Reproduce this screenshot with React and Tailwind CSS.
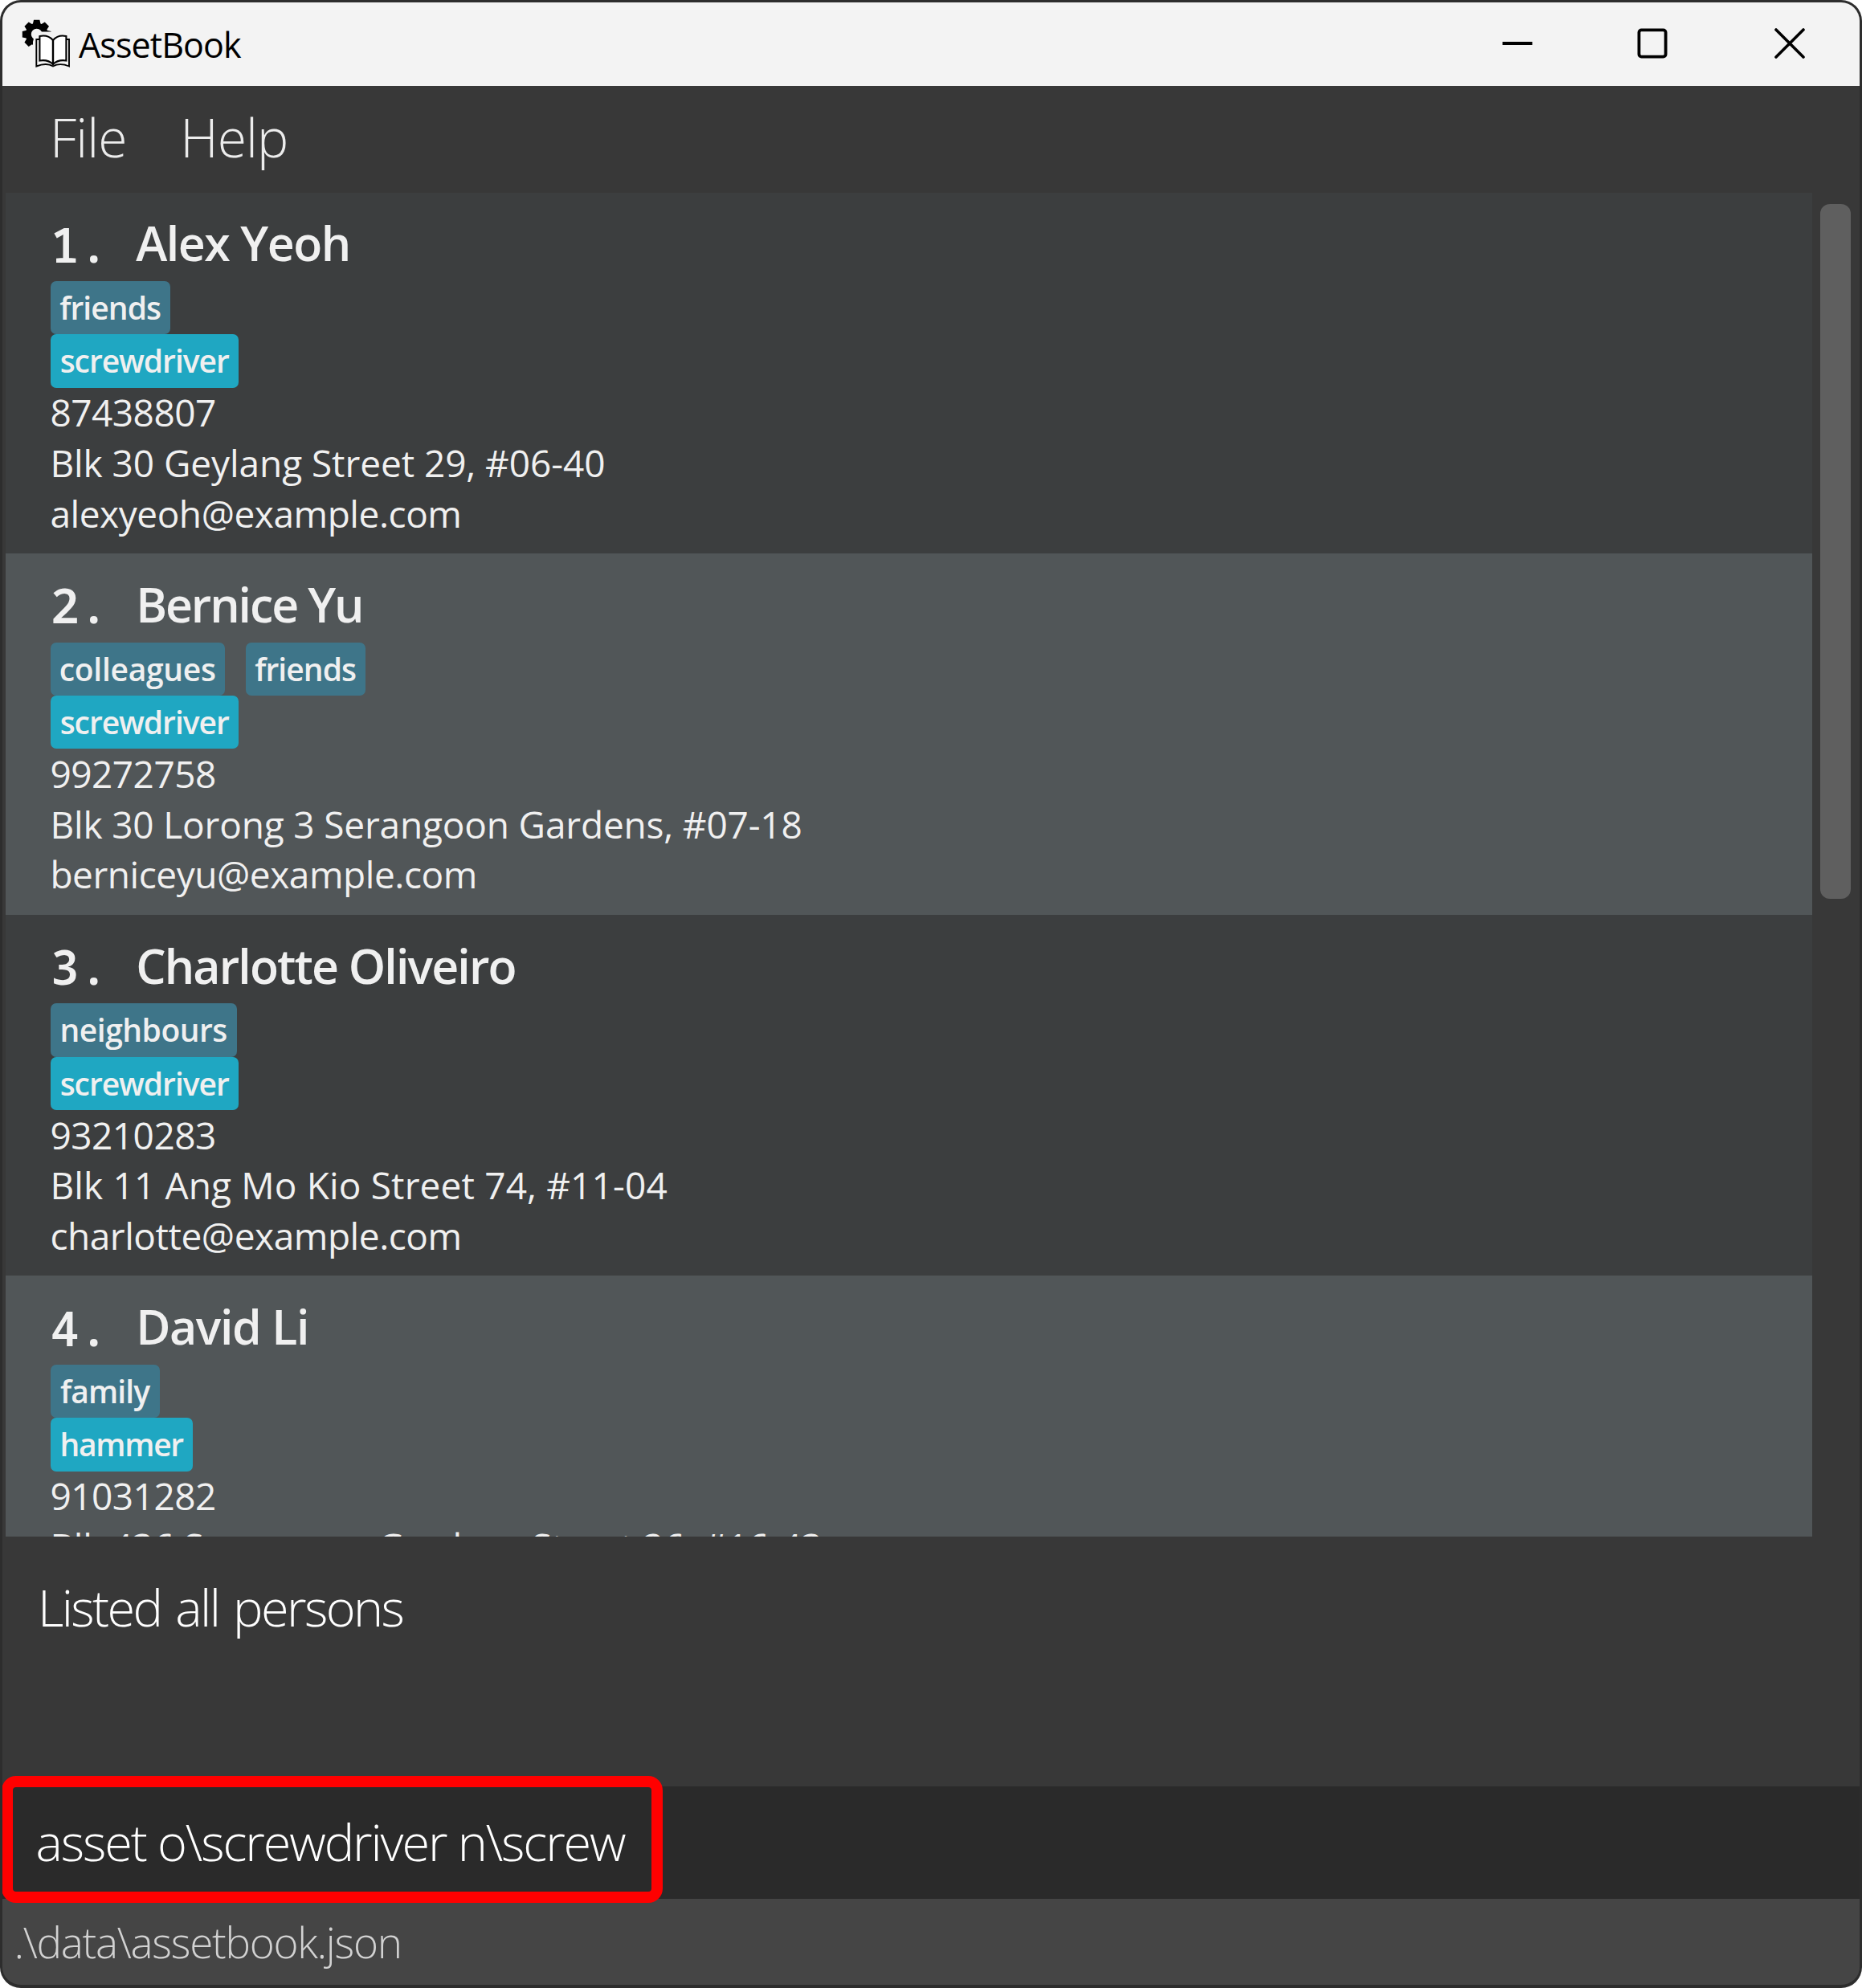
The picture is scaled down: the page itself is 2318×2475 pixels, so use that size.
import React from "react";

const PEOPLE = [
  {
    name: "Alex Yeoh",
    nameClass: "tracking-[-1.45px]",
    tags: [{ label: "friends", cls: "w-[149px] tracking-[-0.9px]" }],
    assets: [{ label: "screwdriver", cls: "w-[234px] tracking-[-1.05px]" }],
    phone: "87438807",
    address: "Blk 30 Geylang Street 29, #06-40",
    addressClass: "tracking-[-0.07px]",
    email: "alexyeoh@example.com",
  },
  {
    name: "Bernice Yu",
    nameClass: "tracking-[-2.1px]",
    tags: [
      { label: "colleagues", cls: "w-[217px] tracking-[-0.3px]" },
      { label: "friends", cls: "w-[149px] tracking-[-0.9px]" },
    ],
    assets: [{ label: "screwdriver", cls: "w-[234px] tracking-[-1.05px]" }],
    phone: "99272758",
    address: "Blk 30 Lorong 3 Serangoon Gardens, #07-18",
    addressClass: "tracking-[-0.17px]",
    email: "berniceyu@example.com",
  },
  {
    name: "Charlotte Oliveiro",
    nameClass: "tracking-[-1.85px]",
    tags: [{ label: "neighbours", cls: "w-[232px] tracking-[-0.5px]" }],
    assets: [{ label: "screwdriver", cls: "w-[234px] tracking-[-1.05px]" }],
    phone: "93210283",
    address: "Blk 11 Ang Mo Kio Street 74, #11-04",
    addressClass: "tracking-[0.15px]",
    email: "charlotte@example.com",
  },
  {
    name: "David Li",
    nameClass: "tracking-[-1.4px]",
    tags: [{ label: "family", cls: "w-[136px] tracking-[-0.9px]" }],
    assets: [{ label: "hammer", cls: "w-[177px] tracking-[-1.3px]" }],
    phone: "91031282",
    address: "Blk 436 Serangoon Gardens Street 26, #16-43",
    addressClass: "tracking-[-0.27px]",
  },
];

function AppIcon() {
  return (
    <svg className="h-[60px] w-[60px] shrink-0" viewBox="0 0 60 60" fill="none">
      <circle cx="18.7" cy="18.7" r="10.4" stroke="#000" strokeWidth="7" />
      <g fill="#000">
        {[0, 45, 90, 135, 180, 225, 270, 315].map((a) => (
          <path key={a} d="M13.6 7 L15 0.8 H22.4 L23.8 7 Z" transform={`rotate(${a} 18.7 18.7)`} />
        ))}
      </g>
      <path d="M14 60 V28 L17 15.6 H60 V60 Z" fill="#f3f3f3" />
      <path d="M22 25 H18.3 V58.5 C26 55.5 34 55.5 39 58.5 C44 55.5 52 55.5 59 58.5 V25 H55.4" stroke="#000" strokeWidth="1.9" />
      <path
        d="M22.4 21 C29 19.5 35 21.5 39 26 C43 21.5 49 19.5 55.4 21 V51.5 C49 50.5 43 52 39 56 C35 52 29 50.5 22.4 51.5 Z"
        fill="#fff"
        stroke="#000"
        strokeWidth="2.1"
      />
      <path d="M39 26 V57.5" stroke="#000" strokeWidth="2.4" />
    </svg>
  );
}

function TitleBar() {
  return (
    <div className="flex h-[104px] shrink-0 items-center bg-[#f3f3f3] pb-[3px] pl-[24px] pr-[68px]">
      <AppIcon />
      <span className="ml-[11px] mt-[5px] text-[43px] leading-[60px] tracking-[-0.9px] text-black">AssetBook</span>
      <div className="ml-auto flex items-center">
        <svg className="mr-[130px] h-[38px] w-[38px]" viewBox="0 0 38 38" fill="none">
          <path d="M0.5 19 H37.5" stroke="#000" strokeWidth="3.8" />
        </svg>
        <svg className="mr-[133.5px] h-[38px] w-[38px]" viewBox="0 0 38 38" fill="none">
          <rect x="2.4" y="2.4" width="33.2" height="33.2" rx="3" stroke="#000" strokeWidth="3.8" />
        </svg>
        <svg className="h-[38px] w-[38px]" viewBox="0 0 38 38" fill="none">
          <path d="M2 2 L36 36 M36 2 L2 36" stroke="#000" strokeWidth="3.6" strokeLinecap="round" />
        </svg>
      </div>
    </div>
  );
}

function Tag({ label, cls, color }) {
  return (
    <span className={`flex h-[66.3px] items-center justify-center rounded-[7px] text-[39px] font-semibold leading-[60px] ${color} ${cls}`}>
      {label}
    </span>
  );
}

function PersonCard({ person, index }) {
  return (
    <div className={`flex h-[449.67px] shrink-0 flex-col pl-[55.7px] pt-[14px] text-[#f0f0f0] ${index % 2 ? "bg-[#515658]" : "bg-[#3c3e3f]"}`}>
      <div className="flex h-[96.5px] shrink-0 items-center font-semibold leading-[80px]">
        <span className="mt-[4px] w-[106.5px] whitespace-pre font-['Noto_Sans_Mono','DejaVu_Sans_Mono',monospace] text-[60px]">{`${index + 1}. `}</span>
        <span className={`mt-[1px] text-[59px] ${person.nameClass}`}>{person.name}</span>
      </div>
      <div className="flex gap-[26px]">
        {person.tags.map((t) => (
          <Tag key={t.label} {...t} color="bg-[#3e7589]" />
        ))}
      </div>
      <div className="flex gap-[26px]">
        {person.assets.map((t) => (
          <Tag key={t.label} {...t} color="bg-[#1fa7c2]" />
        ))}
      </div>
      <div className="-ml-[0.3px] -mt-[0.4px] flex flex-col whitespace-nowrap text-[46px] leading-[62.7px]">
        <span className="tracking-[-0.5px]">{person.phone}</span>
        <span className={person.addressClass}>{person.address}</span>
        {person.email && <span className="tracking-[-0.45px]">{person.email}</span>}
      </div>
    </div>
  );
}

export default function App() {
  return (
    <div className="h-[2475px] w-full bg-white font-['Open_Sans','Noto_Sans',sans-serif]">
      <div className="flex h-full flex-col overflow-hidden rounded-[26px] border-[3px] border-b-[4px] border-[#2d2d2d] bg-[#383838]">
        <TitleBar />
        <div className="flex h-[132.5px] shrink-0 items-center gap-[66.5px] pb-[6px] pl-[59px] text-[66px] font-light leading-[90px] tracking-[-0.9px] text-[#ececec]">
          <span>File</span>
          <span>Help</span>
        </div>
        <div className="flex h-[1673.2px] shrink-0 pl-[4px]">
          <div className="flex w-[2248.5px] flex-col overflow-hidden">
            {PEOPLE.map((p, i) => (
              <PersonCard key={p.name} person={p} index={i} />
            ))}
          </div>
          <div className="ml-[10.5px] mt-[14.5px] h-[865px] w-[37.5px] rounded-[12px] bg-[#5f5f5f]" />
        </div>
        <div className="h-[311.8px] shrink-0 pl-[44px] pt-[46px] text-[63px] font-light leading-[84px] tracking-[-2.6px] text-white [word-spacing:4px]">
          Listed all persons
        </div>
        <div className="relative flex h-[140px] shrink-0 items-center bg-[#2a2a2a] pb-[3px] pl-[41.5px]">
          <span className="text-[63px] font-light leading-[84px] tracking-[-2.1px] text-white">asset o\screwdriver n\screw</span>
          <div className="absolute -left-[1px] -top-[13.5px] h-[158px] w-[823px] rounded-[18px] border-[14px] border-[#ff0000]" />
        </div>
        <div className="flex flex-1 items-center bg-[#454545] pl-[14.5px] pt-[1px] text-[53px] font-light leading-[72px] tracking-[-1.3px] text-[#d2d2d2]">
          .\data\assetbook.json
        </div>
      </div>
    </div>
  );
}
